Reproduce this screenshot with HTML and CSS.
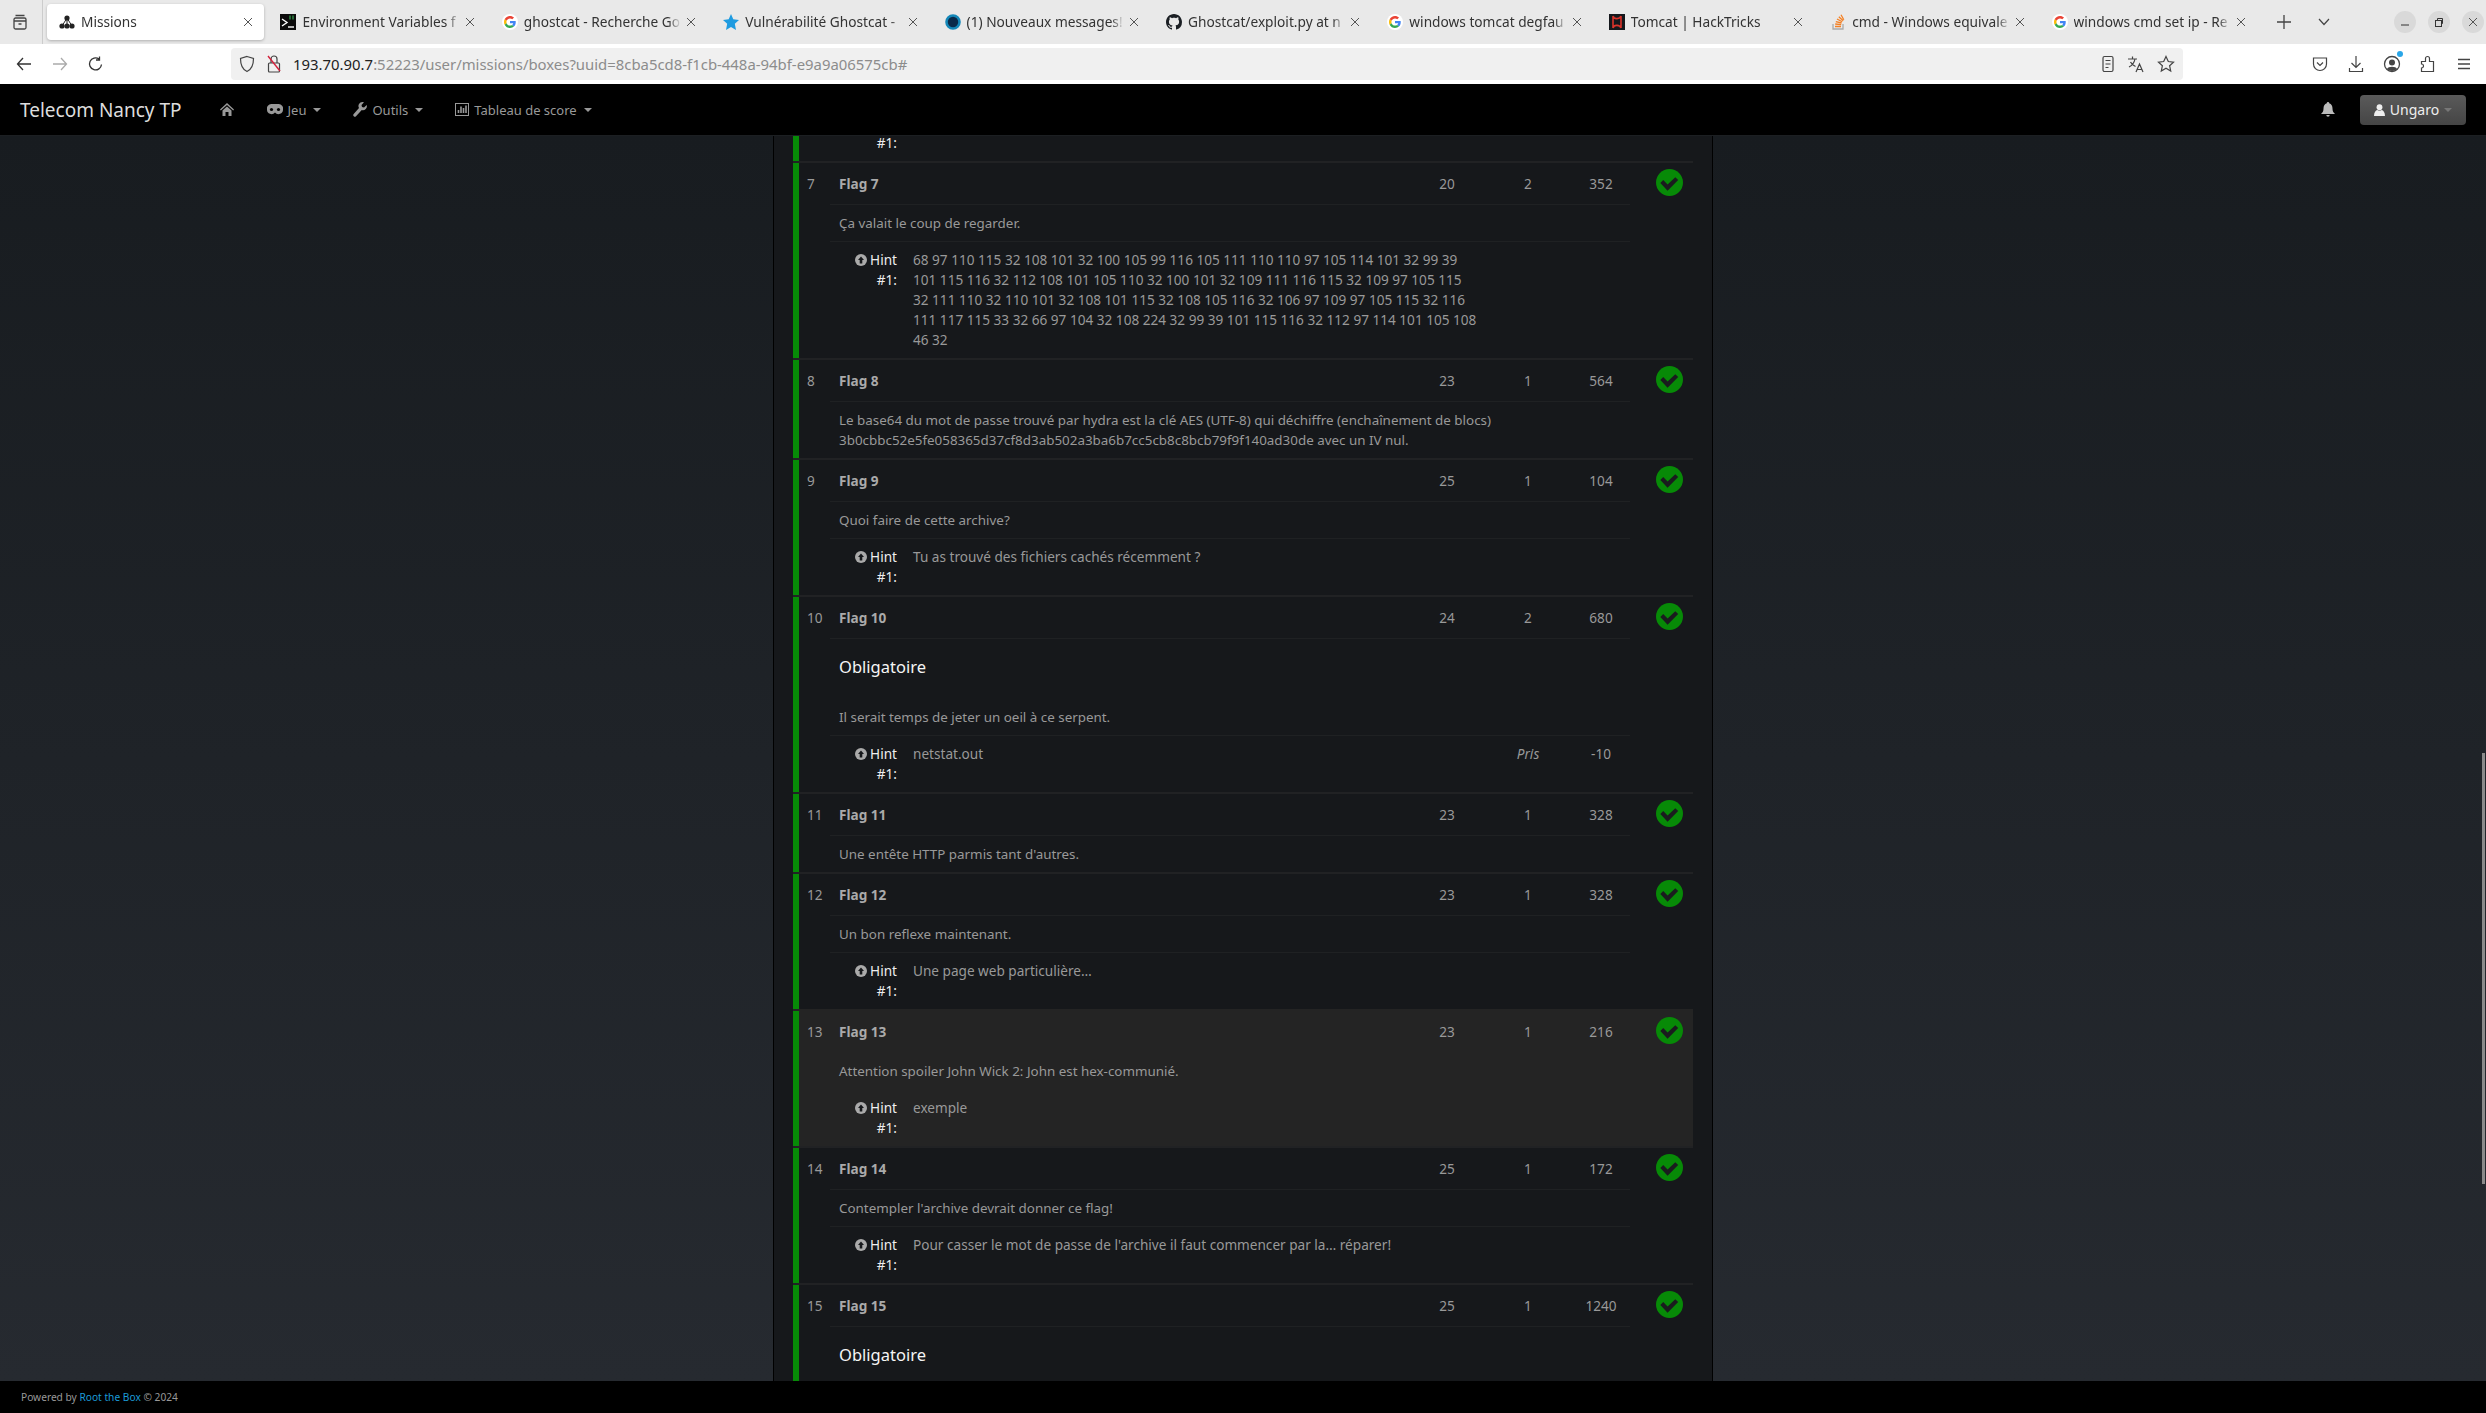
FILE: index.html
```html
<!DOCTYPE html>
<html lang="fr">
<head>
    <meta charset="UTF-8">
    <title>Missions</title>
    <link rel="stylesheet" href="styles.css">
</head>
<body>
    <svg class="sprites" width="0" height="0">
        <symbol id="g" viewBox="0 0 48 48">
            <circle cx="24" cy="24" r="24" fill="#fff"/>
            <g transform="translate(6 6) scale(.75)">
                <path fill="#EA4335" d="M24 9.5c3.54 0 6.71 1.22 9.21 3.6l6.85-6.85C35.9 2.38 30.47 0 24 0 14.62 0 6.51 5.38 2.56 13.22l7.98 6.19C12.43 13.72 17.74 9.5 24 9.5z"/>
                <path fill="#4285F4" d="M46.98 24.55c0-1.57-.15-3.09-.38-4.55H24v9.02h12.94c-.58 2.96-2.26 5.48-4.78 7.18l7.73 6c4.51-4.18 7.09-10.36 7.09-17.65z"/>
                <path fill="#FBBC05" d="M10.53 28.59c-.48-1.45-.76-2.99-.76-4.59s.27-3.14.76-4.59l-7.98-6.19C.92 16.46 0 20.12 0 24c0 3.88.92 7.54 2.56 10.78l7.97-6.19z"/>
                <path fill="#34A853" d="M24 48c6.48 0 11.93-2.13 15.89-5.81l-7.73-6c-2.15 1.45-4.92 2.3-8.16 2.3-6.26 0-11.57-4.22-13.47-9.91l-7.98 6.19C6.51 42.62 14.62 48 24 48z"/>
            </g>
        </symbol>
        <symbol id="close" viewBox="0 0 10 10"><path d="M1 1l8 8M9 1l-8 8" stroke="#555" stroke-width="1" fill="none"/></symbol>
        <symbol id="hint" viewBox="0 0 14 14"><circle cx="7" cy="7" r="7" fill="#aaa"/><path d="M7 3l3.500 4H8.500v4h-3V7h-2z" fill="#16181b"/></symbol>
        <symbol id="ok" viewBox="0 0 28 28"><circle cx="14" cy="14" r="14" fill="#078a07"/><path d="M4.500 14.500l3-3 4.500 4.500 8-7.500 3 3-11 11z" fill="#1a1c1e"/></symbol>
    </svg>

    <div class="tabbar">
        <div class="view-btn">
            <svg width="16" height="18" viewBox="0 0 16 18" fill="none" stroke="#444" stroke-width="1.3"><rect x="2" y="5" width="12" height="11" rx="1.5"/><path d="M3.5 2.5h9M2 8h12M6.5 11h3"/></svg>
        </div>
        <div class="tab active">
            <svg class="fav" viewBox="0 0 16 16"><circle cx="8" cy="4" r="2.6" fill="#222"/><circle cx="3" cy="12" r="2.6" fill="#222"/><circle cx="8" cy="12" r="2.6" fill="#222"/><circle cx="13" cy="12" r="2.6" fill="#222"/><path d="M8 4L3 12M8 4v8M8 4l5 8" stroke="#222"/></svg>
            <span class="tab-title">Missions</span>
            <svg class="tab-close"><use href="#close"/></svg>
        </div>
        <div class="tab">
            <svg class="fav" viewBox="0 0 16 16"><rect width="16" height="16" fill="#0c0c0c"/><path d="M2 5l5 3.5L2 12" stroke="#fff" stroke-width="1.4" fill="none"/><path d="M8 13h6" stroke="#fff" stroke-width="1.4"/><path d="M10 1.5v4M13 1.5v4" stroke="#3ac45a"/></svg>
            <span class="tab-title">Environment Variables f</span>
            <svg class="tab-close"><use href="#close"/></svg>
        </div>
        <div class="tab">
            <svg class="fav"><use href="#g"/></svg>
            <span class="tab-title">ghostcat - Recherche Go</span>
            <svg class="tab-close"><use href="#close"/></svg>
        </div>
        <div class="tab">
            <svg class="fav" viewBox="0 0 16 16"><path d="M8 0l2.3 5.3L16 6l-4.2 3.8L13 16 8 12.9 3 16l1.2-6.2L0 6l5.7-.7z" fill="#1e9be0"/></svg>
            <span class="tab-title">Vulnérabilité Ghostcat -</span>
            <svg class="tab-close"><use href="#close"/></svg>
        </div>
        <div class="tab">
            <svg class="fav" viewBox="0 0 16 16"><circle cx="8" cy="8" r="6.5" fill="#0a2a4a" stroke="#1487b8" stroke-width="2.6"/></svg>
            <span class="tab-title">(1) Nouveaux messages!</span>
            <svg class="tab-close"><use href="#close"/></svg>
        </div>
        <div class="tab">
            <svg class="fav" viewBox="0 0 16 16"><path fill="#1b1f24" d="M8 0C3.58 0 0 3.58 0 8c0 3.54 2.29 6.53 5.47 7.59.4.07.55-.17.55-.38 0-.19-.01-.82-.01-1.49-2.01.37-2.53-.49-2.69-.94-.09-.23-.48-.94-.82-1.13-.28-.15-.68-.52-.01-.53.63-.01 1.08.58 1.23.82.72 1.21 1.87.87 2.33.66.07-.52.28-.87.51-1.07-1.78-.2-3.64-.89-3.64-3.95 0-.87.31-1.59.82-2.15-.08-.2-.36-1.02.08-2.12 0 0 .67-.21 2.2.82.64-.18 1.32-.27 2-.27s1.36.09 2 .27c1.53-1.04 2.2-.82 2.2-.82.44 1.1.16 1.92.08 2.12.51.56.82 1.27.82 2.15 0 3.07-1.87 3.75-3.65 3.95.29.25.54.73.54 1.48 0 1.07-.01 1.93-.01 2.2 0 .21.15.46.55.38A8.01 8.01 0 0 0 16 8c0-4.42-3.58-8-8-8z"/></svg>
            <span class="tab-title">Ghostcat/exploit.py at n</span>
            <svg class="tab-close"><use href="#close"/></svg>
        </div>
        <div class="tab">
            <svg class="fav"><use href="#g"/></svg>
            <span class="tab-title">windows tomcat degfau</span>
            <svg class="tab-close"><use href="#close"/></svg>
        </div>
        <div class="tab">
            <svg class="fav" viewBox="0 0 16 16"><rect width="16" height="16" fill="#15181c"/><path d="M4 2c1 4 7 3 8 0M4 14c1-4 7-3 8 0M4 2v12M12 2v12" stroke="#d9342b" stroke-width="1.6" fill="none"/></svg>
            <span class="tab-title">Tomcat | HackTricks</span>
            <svg class="tab-close"><use href="#close"/></svg>
        </div>
        <div class="tab">
            <svg class="fav" viewBox="0 0 16 16"><path d="M3 10v5h10v-5" stroke="#aaa" stroke-width="1.3" fill="none"/><path d="M5 12.5h6M5.2 10l6 .6M5.8 7.6l5.8 1.4M7 5l5.2 2.8M8.8 2.8l4.4 4M11 .8l2.8 5" stroke="#f48024" stroke-width="1.3"/></svg>
            <span class="tab-title">cmd - Windows equivale</span>
            <svg class="tab-close"><use href="#close"/></svg>
        </div>
        <div class="tab">
            <svg class="fav"><use href="#g"/></svg>
            <span class="tab-title">windows cmd set ip - Re</span>
            <svg class="tab-close"><use href="#close"/></svg>
        </div>
        <div class="tab-new">
            <svg width="14" height="14" viewBox="0 0 14 14"><path d="M7 0v14M0 7h14" stroke="#444" stroke-width="1.3"/></svg>
        </div>
        <div class="tab-list">
            <svg width="12" height="8" viewBox="0 0 12 8" fill="none" stroke="#444" stroke-width="1.2"><path d="M1 1l5 5.5L11 1"/></svg>
        </div>
        <div class="win-btns">
            <span class="win-btn"><svg width="8" height="8" viewBox="0 0 8 8"><path d="M0 7h8" stroke="#333"/></svg></span>
            <span class="win-btn"><svg width="8" height="9" viewBox="0 0 8 9" fill="none" stroke="#333"><rect x=".5" y="2.5" width="6" height="6"/><path d="M2.5 2V.5h5v5H7"/></svg></span>
            <span class="win-btn"><svg width="10" height="10"><use href="#close"/></svg></span>
        </div>
    </div>

    <div class="toolbar">
        <div class="nav-btn"><svg width="16" height="14" viewBox="0 0 16 14" fill="none" stroke="#333" stroke-width="1.3"><path d="M7 1L1.5 7 7 13M1.5 7H15"/></svg></div>
        <div class="nav-btn"><svg width="16" height="14" viewBox="0 0 16 14" fill="none" stroke="#aaa" stroke-width="1.3"><path d="M9 1l5.5 6L9 13M14.5 7H1"/></svg></div>
        <div class="nav-btn"><svg width="16" height="16" viewBox="0 0 16 16" fill="none" stroke="#333" stroke-width="1.3"><path d="M13.5 8.5A6 6 0 1 1 11 3M11.5 .5V4H8"/></svg></div>
        <div class="urlbar">
            <svg class="url-icon" width="16" height="18" viewBox="0 0 16 18" fill="none" stroke="#444" stroke-width="1.2"><path d="M8 1.5l6.5 2C14.5 10 12.5 14.5 8 16.5 3.500 14.500 1.500 10 1.500 3.500z"/></svg>
            <svg class="url-icon" width="16" height="20" viewBox="0 0 16 20" fill="none" stroke="#444" stroke-width="1.2"><rect x="2.500" y="9" width="11" height="9" rx="1"/><path d="M5 9V5a3 3 0 0 1 6 0v4"/><path d="M2 2l12 15" stroke="#d3213c" stroke-width="1.400"/></svg>
            <span class="url"><span class="url-host">193.70.90.7</span>:52223/user/missions/boxes?uuid=8cba5cd8-f1cb-448a-94bf-e9a9a06575cb#</span>
            <div class="url-actions">
                <svg width="14" height="18" viewBox="0 0 14 18" fill="none" stroke="#444" stroke-width="1.2"><rect x="2" y="1.500" width="10" height="15" rx="1.500"/><path d="M4.500 5.500h5M4.500 9h5M4.500 12.500h3"/></svg>
                <svg width="18" height="18" viewBox="0 0 18 18" fill="none" stroke="#444" stroke-width="1.200"><path d="M1 4h9M5.500 1.500V4M8 4c-.7 3.500-3 6.500-6 8M3.500 7c1 2 3 3.500 5 4.500M9 17l3.500-8 3.500 8M10.200 14.500h4.600"/></svg>
                <svg width="18" height="18" viewBox="0 0 18 18" fill="none" stroke="#444" stroke-width="1.200"><path d="M9 1.500l2.300 5 5.200.6-3.900 3.600 1.100 5.300L9 13.300 4.300 16l1.100-5.300L1.500 7.100l5.200-.6z"/></svg>
            </div>
        </div>
        <div class="tool-icons">
            <div class="nav-btn"><svg width="16" height="16" viewBox="0 0 16 16" fill="none" stroke="#444" stroke-width="1.200"><path d="M1.500 2h13v6a6.500 6.500 0 0 1-13 0z"/><path d="M5 6.500L8 9.500l3-3"/></svg></div>
            <div class="nav-btn"><svg width="16" height="18" viewBox="0 0 16 18" fill="none" stroke="#444" stroke-width="1.200"><path d="M8 1v11M3.500 8L8 12.500 12.500 8M1.500 13v3.500h13V13"/></svg></div>
            <div class="nav-btn profile"><svg width="18" height="18" viewBox="0 0 18 18"><circle cx="9" cy="9" r="7.500" fill="none" stroke="#444" stroke-width="1.300"/><circle cx="9" cy="7.500" r="3" fill="#444"/><path d="M4 14c1-3 9-3 10 0a7 7 0 0 1-10 0z" fill="#444"/></svg></div>
            <div class="nav-btn"><svg width="16" height="18" viewBox="0 0 16 18" fill="none" stroke="#444" stroke-width="1.200"><path d="M1.500 6.500h4V3.500a2 2 0 0 1 4 0v3h4v10h-12v-3.500a2 2 0 0 0 0-4z"/></svg></div>
            <div class="nav-btn"><svg width="14" height="12" viewBox="0 0 14 12" fill="none" stroke="#444" stroke-width="1.300"><path d="M1 1.500h12M1 6h12M1 10.500h12"/></svg></div>
        </div>
    </div>

    <div class="navbar">
        <a class="brand">Telecom Nancy TP</a>
        <a class="nav-link home"><svg width="14" height="13" viewBox="0 0 14 13"><path d="M7 0l7 6.500-.8.900L7 2 .8 7.400 0 6.500zM2.500 7.500L7 3.500l4.500 4V13H8.500V9h-3v4h-3z" fill="#999"/></svg></a>
        <a class="nav-link"><svg width="16" height="11" viewBox="0 0 16 11"><path fill="#999" d="M4.500 0h7A4.500 4.500 0 0 1 16 5.500 4.500 4.500 0 0 1 8 8.400 4.500 4.500 0 0 1 0 5.500 4.500 4.500 0 0 1 4.500 0z"/><circle cx="4.500" cy="5.500" r="1.600" fill="#000"/><circle cx="11.500" cy="5.500" r="1.600" fill="#000"/></svg>Jeu<i class="caret"></i></a>
        <a class="nav-link"><svg width="14" height="15" viewBox="0 0 14 15"><path fill="#999" d="M9.500 0a4 4 0 0 1 1.500.3L8.500 3l.5 2 2 .5 2.700-2.500A4 4 0 0 1 8.800 8L3 14.200a1.500 1.500 0 0 1-2.300-2.100L6 6a4 4 0 0 1 3.500-6z"/></svg>Outils<i class="caret"></i></a>
        <a class="nav-link"><svg width="14" height="13" viewBox="0 0 14 13" fill="none" stroke="#999"><rect x=".5" y=".5" width="13" height="12"/><path d="M3.500 10V7M6 10V3.500M8.500 10V5M11 10V2.500" stroke-width="1.600"/></svg>Tableau de score<i class="caret"></i></a>
        <svg class="bell" width="14" height="15" viewBox="0 0 14 15"><path fill="#bbb" d="M7 0a1.200 1.200 0 0 1 1.200 1.300C10.500 2 11.500 4 11.500 6.500c0 2.500.8 4 2.500 5.500H0c1.700-1.500 2.500-3 2.500-5.500C2.500 4 3.500 2 5.800 1.300A1.200 1.200 0 0 1 7 0zM5.300 13h3.400a1.700 1.700 0 0 1-3.400 0z"/></svg>
        <a class="user-btn"><svg width="11" height="12" viewBox="0 0 12 13"><circle cx="6" cy="3.500" r="3.200" fill="#eee"/><path d="M0 13c0-4 2-6 3.500-6.500 1.500 1 3.500 1 5 0C10 7 12 9 12 13z" fill="#eee"/></svg>Ungaro<i class="caret dim"></i></a>
    </div>

    <div class="main">
        <div class="panel">
            <div class="row first">
                <div class="row-body">
                    <div></div>
                    <div class="hint cut"><div class="hint-label"><div>#1:</div></div></div>
                    <div></div>
                </div>
            </div>

            <div class="row">
                <div class="row-body">
                    <div class="num">7</div>
                    <div>
                        <div class="head"><b>Flag 7</b><span>20</span><span>2</span><span class="pts">352</span></div>
                        <div class="desc">Ça valait le coup de regarder.</div>
                        <div class="hint">
                            <div class="hint-label"><div><svg class="hint-icon"><use href="#hint"/></svg> Hint</div><div>#1:</div></div>
                            <div class="hint-text">68 97 110 115 32 108 101 32 100 105 99 116 105 111 110 110 97 105 114 101 32 99 39 101 115 116 32 112 108 101 105 110 32 100 101 32 109 111 116 115 32 109 97 105 115 32 111 110 32 110 101 32 108 101 115 32 108 105 116 32 106 97 109 97 105 115 32 116 111 117 115 33 32 66 97 104 32 108 224 32 99 39 101 115 116 32 112 97 114 101 105 108 46 32</div>
                        </div>
                    </div>
                    <svg class="ok"><use href="#ok"/></svg>
                </div>
            </div>

            <div class="row">
                <div class="row-body">
                    <div class="num">8</div>
                    <div>
                        <div class="head"><b>Flag 8</b><span>23</span><span>1</span><span class="pts">564</span></div>
                        <div class="desc last">Le base64 du mot de passe trouvé par hydra est la clé AES (UTF-8) qui déchiffre (enchaînement de blocs)<br>3b0cbbc52e5fe058365d37cf8d3ab502a3ba6b7cc5cb8c8bcb79f9f140ad30de avec un IV nul.</div>
                    </div>
                    <svg class="ok"><use href="#ok"/></svg>
                </div>
            </div>

            <div class="row">
                <div class="row-body">
                    <div class="num">9</div>
                    <div>
                        <div class="head"><b>Flag 9</b><span>25</span><span>1</span><span class="pts">104</span></div>
                        <div class="desc">Quoi faire de cette archive?</div>
                        <div class="hint">
                            <div class="hint-label"><div><svg class="hint-icon"><use href="#hint"/></svg> Hint</div><div>#1:</div></div>
                            <div class="hint-text">Tu as trouvé des fichiers cachés récemment ?</div>
                        </div>
                    </div>
                    <svg class="ok"><use href="#ok"/></svg>
                </div>
            </div>

            <div class="row">
                <div class="row-body">
                    <div class="num">10</div>
                    <div>
                        <div class="head"><b>Flag 10</b><span>24</span><span>2</span><span class="pts">680</span></div>
                        <div class="desc"><h4>Obligatoire</h4>Il serait temps de jeter un oeil à ce serpent.</div>
                        <div class="hint">
                            <div class="hint-label"><div><svg class="hint-icon"><use href="#hint"/></svg> Hint</div><div>#1:</div></div>
                            <div class="hint-text">netstat.out</div>
                            <em class="taken">Pris</em>
                            <span class="cost">-10</span>
                        </div>
                    </div>
                    <svg class="ok"><use href="#ok"/></svg>
                </div>
            </div>

            <div class="row">
                <div class="row-body">
                    <div class="num">11</div>
                    <div>
                        <div class="head"><b>Flag 11</b><span>23</span><span>1</span><span class="pts">328</span></div>
                        <div class="desc last">Une entête HTTP parmis tant d'autres.</div>
                    </div>
                    <svg class="ok"><use href="#ok"/></svg>
                </div>
            </div>

            <div class="row">
                <div class="row-body">
                    <div class="num">12</div>
                    <div>
                        <div class="head"><b>Flag 12</b><span>23</span><span>1</span><span class="pts">328</span></div>
                        <div class="desc">Un bon reflexe maintenant.</div>
                        <div class="hint">
                            <div class="hint-label"><div><svg class="hint-icon"><use href="#hint"/></svg> Hint</div><div>#1:</div></div>
                            <div class="hint-text">Une page web particulière…</div>
                        </div>
                    </div>
                    <svg class="ok"><use href="#ok"/></svg>
                </div>
            </div>

            <div class="row hover">
                <div class="row-body">
                    <div class="num">13</div>
                    <div>
                        <div class="head"><b>Flag 13</b><span>23</span><span>1</span><span class="pts">216</span></div>
                        <div class="desc">Attention spoiler John Wick 2: John est hex-communié.</div>
                        <div class="hint">
                            <div class="hint-label"><div><svg class="hint-icon"><use href="#hint"/></svg> Hint</div><div>#1:</div></div>
                            <div class="hint-text">exemple</div>
                        </div>
                    </div>
                    <svg class="ok"><use href="#ok"/></svg>
                </div>
            </div>

            <div class="row">
                <div class="row-body">
                    <div class="num">14</div>
                    <div>
                        <div class="head"><b>Flag 14</b><span>25</span><span>1</span><span class="pts">172</span></div>
                        <div class="desc">Contempler l'archive devrait donner ce flag!</div>
                        <div class="hint">
                            <div class="hint-label"><div><svg class="hint-icon"><use href="#hint"/></svg> Hint</div><div>#1:</div></div>
                            <div class="hint-text">Pour casser le mot de passe de l'archive il faut commencer par la… réparer!</div>
                        </div>
                    </div>
                    <svg class="ok"><use href="#ok"/></svg>
                </div>
            </div>

            <div class="row">
                <div class="row-body">
                    <div class="num">15</div>
                    <div>
                        <div class="head"><b>Flag 15</b><span>25</span><span>1</span><span class="pts">1240</span></div>
                        <div class="desc last"><h4>Obligatoire</h4></div>
                    </div>
                    <svg class="ok"><use href="#ok"/></svg>
                </div>
            </div>
        </div>
        <div class="scrollbar"></div>
    </div>

    <div class="footer">Powered by <a>Root the Box</a> © 2024</div>
</body>
</html>
```

FILE: styles.css
```css
* {
    box-sizing: border-box;
}
body {
    margin: 0;
    height: 100vh;
    overflow: hidden;
    display: flex;
    flex-direction: column;
    background: #000;
    font-family: "Noto Sans", "Open Sans", sans-serif;
    font-size: 13.6px;
    line-height: 20px;
    color: #999;
}
svg {
    flex: none;
}
.sprites {
    position: absolute;
}

/* browser chrome */
.tabbar {
    display: flex;
    align-items: center;
    flex: none;
    height: 44px;
    background: #e9e9e9;
}
.view-btn {
    display: flex;
    align-items: center;
    justify-content: center;
    width: 43px;
    height: 44px;
    margin-right: 2px;
    padding-right: 3px;
    border-right: 1px solid #ccc;
}
.tab {
    display: flex;
    align-items: center;
    flex: none;
    width: 217.4px;
    height: 36px;
    margin: 0 2px;
    padding: 0 11px 0 12px;
    border-radius: 4px;
    font-size: 13.7px;
    color: #333;
}
.tab.active {
    background: #fff;
    box-shadow: 0 1px 3px rgba(0, 0, 0, .25);
}
.fav {
    width: 16px;
    height: 16px;
    margin-right: 6px;
}
.tab-title {
    flex: 1;
    min-width: 0;
    white-space: nowrap;
    -webkit-mask-image: linear-gradient(to right, #000 92%, transparent);
    mask-image: linear-gradient(to right, #000 92%, transparent);
}
.tab-close {
    width: 10px;
    height: 10px;
    margin-left: 5px;
}
.tab-new {
    display: flex;
    justify-content: center;
    width: 51px;
}
.tab-list {
    display: flex;
    justify-content: center;
    width: 28px;
}
.win-btns {
    display: flex;
    gap: 12px;
    margin-left: auto;
    padding-right: 2px;
}
.win-btn {
    display: flex;
    align-items: center;
    justify-content: center;
    width: 22px;
    height: 22px;
    border-radius: 50%;
    background: #d9d9d9;
}
.toolbar {
    display: flex;
    align-items: center;
    flex: none;
    height: 40px;
    padding-left: 6px;
    background: #fff;
}
.nav-btn {
    display: flex;
    align-items: center;
    justify-content: center;
    width: 36px;
    height: 36px;
}
.profile {
    position: relative;
}
.profile::after {
    content: "";
    position: absolute;
    top: 5px;
    right: 7px;
    width: 6px;
    height: 6px;
    border-radius: 50%;
    background: #2aa6e8;
}
.urlbar {
    display: flex;
    align-items: center;
    width: 1952px;
    height: 32px;
    margin-left: 117px;
    padding: 0 8px;
    border-radius: 4px;
    background: #f0f0f0;
    font-size: 14.9px;
    color: #8c8c8c;
}
.url-icon {
    margin-right: 11px;
}
.url-host {
    color: #222;
}
.url-actions {
    display: flex;
    align-items: center;
    gap: 12px;
    margin-left: auto;
}
.tool-icons {
    display: flex;
    margin-left: auto;
    padding-right: 4px;
}

/* site navbar */
.navbar {
    display: flex;
    align-items: center;
    flex: none;
    height: 52px;
    padding: 0 20px;
    background: #000;
    border-bottom: 1px solid #1c1f22;
    font-size: 13px;
}
.brand {
    margin-right: 38px;
    font-size: 19px;
    color: #ddd;
}
.nav-link {
    display: flex;
    align-items: center;
    gap: 5px;
    margin-right: 32px;
    color: #999;
}
.nav-link.home {
    margin-right: 33px;
}
.caret {
    width: 0;
    height: 0;
    margin-left: 2px;
    border-top: 4px solid #999;
    border-left: 4px solid transparent;
    border-right: 4px solid transparent;
}
.caret.dim {
    border-top-color: #777;
    margin-left: 0;
}
.bell {
    margin-left: auto;
    margin-right: 25px;
}
.user-btn {
    display: flex;
    align-items: center;
    justify-content: center;
    gap: 5px;
    width: 106px;
    height: 30px;
    border-radius: 4px;
    background: linear-gradient(#5a5a5a, #454545);
    font-size: 14px;
    color: #eee;
}

/* page */
.main {
    position: relative;
    flex: 1;
    min-height: 0;
    overflow: hidden;
    background: linear-gradient(#181c20, #262a30);
}
.panel {
    width: 940px;
    min-height: 100%;
    margin: 0 auto;
    padding: 0 19px;
    border-left: 1px solid #000;
    border-right: 1px solid #000;
    background: #16181b;
}
.row {
    border-top: 2px solid #212224;
}
.row.first {
    border-top: 0;
}
.row.hover {
    border-top-color: #242424;
    background: #242424;
}
.row-body {
    display: grid;
    grid-template-columns: 31px 800px 63px;
    border-left: 6px solid #078a07;
}
.num {
    padding: 11px 0 0 8px;
}
.head {
    display: grid;
    grid-template-columns: 1fr 82px 80px 62px;
    padding: 11px 0 10px;
    border-bottom: 1px solid #1f2123;
    text-align: center;
}
.head b {
    padding-left: 9px;
    text-align: left;
    color: #aaa;
}
.pts {
    padding-left: 4px;
}
.desc {
    padding: 8px 9px;
    border-bottom: 1px solid #1f2123;
    font-size: 13.4px;
}
.desc.last {
    border-bottom: 0;
}
.hover .desc,
.hover .head {
    border-bottom-color: transparent;
}
.desc h4 {
    margin: 10px 0 30px;
    font-size: 16.5px;
    line-height: 20px;
    font-weight: normal;
    color: #f5f5f5;
}
.hint {
    display: grid;
    grid-template-columns: 67px 1fr 80px 62px;
    padding: 8px 0;
}
.hint.cut {
    grid-template-columns: 67px;
    padding: 0 0 11px;
    line-height: 14px;
}
.hint-label {
    text-align: right;
    color: #eee;
}
.hint-icon {
    width: 12px;
    height: 12px;
    vertical-align: -1px;
}
.hint-text {
    max-width: 581px;
    padding-left: 16px;
}
.taken {
    text-align: center;
}
.cost {
    padding-left: 4px;
    text-align: center;
}
.ok {
    width: 27px;
    height: 27px;
    margin: 6px 0 0 26px;
}
.scrollbar {
    position: absolute;
    top: 617px;
    right: 1px;
    width: 3px;
    height: 431px;
    background: #8a8a8a;
}
.footer {
    flex: none;
    height: 32px;
    padding-left: 21px;
    font-size: 10.2px;
    line-height: 32px;
    color: #999;
    background: #000;
}
.footer a {
    color: #1b9bd8;
}
```
